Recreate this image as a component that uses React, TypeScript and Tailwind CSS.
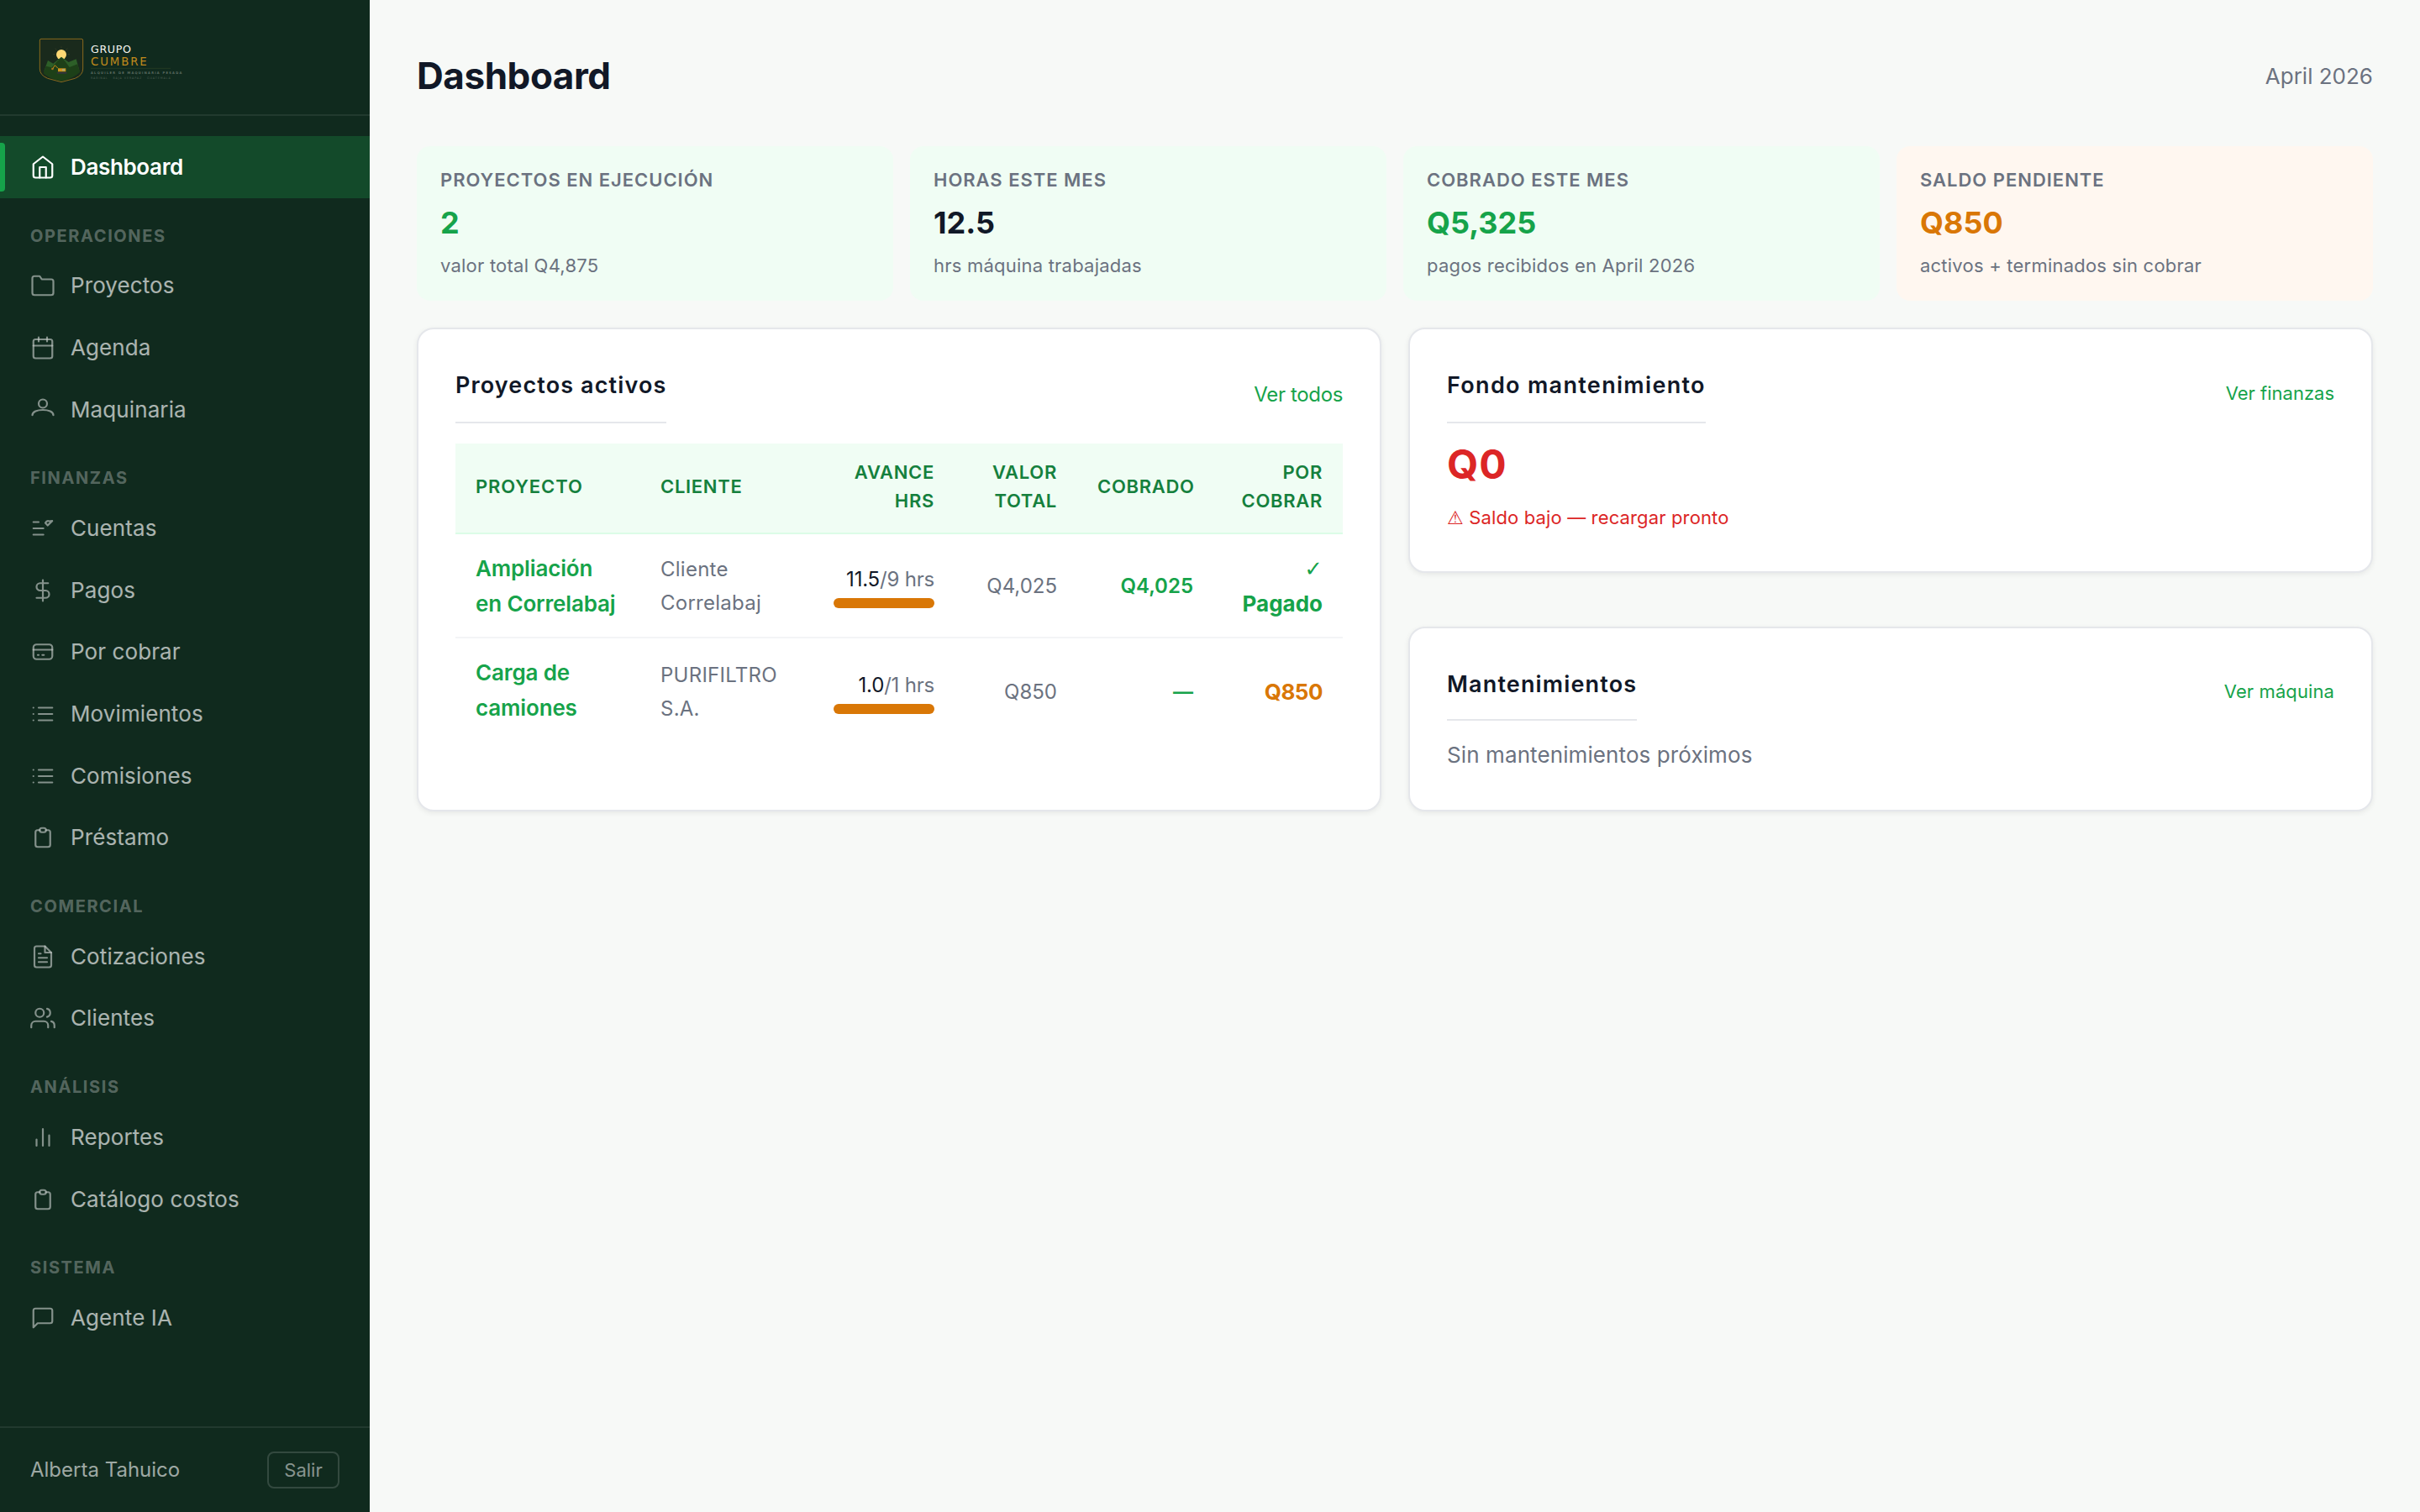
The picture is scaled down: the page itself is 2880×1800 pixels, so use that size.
import type { ReactNode } from "react";
import clsx from "clsx";

const icons = {
  home: (
    <>
      <path d="M3 9l9-7 9 7v11a2 2 0 0 1-2 2H5a2 2 0 0 1-2-2z" />
      <path d="M9 22V12h6v10" />
    </>
  ),
  folder: <path d="M22 19a2 2 0 0 1-2 2H4a2 2 0 0 1-2-2V5a2 2 0 0 1 2-2h5l2 3h9a2 2 0 0 1 2 2z" />,
  calendar: (
    <>
      <rect x="3" y="4" width="18" height="18" rx="2" />
      <path d="M16 2v4M8 2v4M3 10h18" />
    </>
  ),
  operator: (
    <>
      <circle cx="12" cy="6" r="4" />
      <path d="M2 17C2 13.6 6.8 12 12 12s10 1.6 10 5" />
    </>
  ),
  accounts: <path d="M3 6h5M3 12h9.5M3 18h9.5M20.9 4.9l-4.3 4.3-2.2-2.4c1-1.8 2.6-2 3.6-1.6z" />,
  dollar: <path d="M12 2v20M17 5H9.5a3.5 3.5 0 0 0 0 7h5a3.5 3.5 0 0 1 0 7H6" />,
  card: (
    <>
      <rect x="3" y="5" width="18" height="14" rx="3" />
      <path d="M3 10h18M7.2 15h.8M11.5 15h1.5" />
    </>
  ),
  list: <path d="M8 6h13M8 12h13M8 18h13M3 6h.01M3 12h.01M3 18h.01" />,
  clipboard: (
    <>
      <path d="M9 5H7a2 2 0 0 0-2 2v12a2 2 0 0 0 2 2h10a2 2 0 0 0 2-2V7a2 2 0 0 0-2-2h-2" />
      <rect x="9" y="3" width="6" height="4" rx="2" />
    </>
  ),
  file: (
    <>
      <path d="M14 2H6a2 2 0 0 0-2 2v16a2 2 0 0 0 2 2h12a2 2 0 0 0 2-2V8z" />
      <path d="M14 2v6h6M16 13H8M16 17H8M10 9H8" />
    </>
  ),
  users: (
    <>
      <path d="M17 21v-2a4 4 0 0 0-4-4H5a4 4 0 0 0-4 4v2" />
      <circle cx="9" cy="7" r="4" />
      <path d="M23 21v-2a4 4 0 0 0-3-3.87M16 3.13a4 4 0 0 1 0 7.75" />
    </>
  ),
  chart: <path d="M18 20V10M12 20V4M6 20v-6" />,
  chat: <path d="M21 15a2 2 0 0 1-2 2H7l-4 4V5a2 2 0 0 1 2-2h14a2 2 0 0 1 2 2z" />,
};

type IconName = keyof typeof icons;
type NavEntry = { label: string; icon: IconName; active?: boolean };

const navGroups: { title?: string; items: NavEntry[] }[] = [
  { items: [{ label: "Dashboard", icon: "home", active: true }] },
  {
    title: "OPERACIONES",
    items: [
      { label: "Proyectos", icon: "folder" },
      { label: "Agenda", icon: "calendar" },
      { label: "Maquinaria", icon: "operator" },
    ],
  },
  {
    title: "FINANZAS",
    items: [
      { label: "Cuentas", icon: "accounts" },
      { label: "Pagos", icon: "dollar" },
      { label: "Por cobrar", icon: "card" },
      { label: "Movimientos", icon: "list" },
      { label: "Comisiones", icon: "list" },
      { label: "Préstamo", icon: "clipboard" },
    ],
  },
  {
    title: "COMERCIAL",
    items: [
      { label: "Cotizaciones", icon: "file" },
      { label: "Clientes", icon: "users" },
    ],
  },
  {
    title: "ANÁLISIS",
    items: [
      { label: "Reportes", icon: "chart" },
      { label: "Catálogo costos", icon: "clipboard" },
    ],
  },
  { title: "SISTEMA", items: [{ label: "Agente IA", icon: "chat" }] },
];

const stats = [
  { label: "PROYECTOS EN EJECUCIÓN", value: "2", note: "valor total Q4,875", bg: "bg-[#f0fdf4]", color: "text-[#16a34a]" },
  { label: "HORAS ESTE MES", value: "12.5", note: "hrs máquina trabajadas", bg: "bg-[#f0fdf4]", color: "text-[#111827]" },
  { label: "COBRADO ESTE MES", value: "Q5,325", note: "pagos recibidos en April 2026", bg: "bg-[#f0fdf4]", color: "text-[#16a34a]" },
  { label: "SALDO PENDIENTE", value: "Q850", note: "activos + terminados sin cobrar", bg: "bg-[#fff7f0]", color: "text-[#d97706]" },
];

const projects = [
  {
    name: ["Ampliación", "en Correlabaj"],
    client: ["Cliente", "Correlabaj"],
    hours: "11.5",
    planned: "9",
    total: "Q4,025",
    paid: "Q4,025",
    due: null,
  },
  {
    name: ["Carga de", "camiones"],
    client: ["PURIFILTRO", "S.A."],
    hours: "1.0",
    planned: "1",
    total: "Q850",
    paid: "—",
    due: "Q850",
  },
];

function Logo() {
  return (
    <svg width="200" height="64" viewBox="108 108 600 192" fontFamily="DejaVu Sans, sans-serif">
      <path
        d="M147 139H291Q296 139 296 144V246Q296 268 268 280L219 293L170 280Q142 268 142 246V144Q142 139 147 139z"
        fill="#1a2a1c"
        stroke="#8a6a1e"
        strokeWidth="3"
      />
      <g stroke="#3d4327" strokeWidth="2">
        <path d="M219 166v6M197 173l5 5M241 173l-5 5M189 194h8M241 194h8" />
      </g>
      <circle cx="219" cy="195" r="18" fill="#fdd874" />
      <path d="M157 254L171 216L190 227L219 203L245 222L272 211L284 254z" fill="#2d5f28" />
      <path d="M155 262L164 236L184 241L205 218L219 205L232 218L248 240L277 229L285 258Q262 280 219 290Q176 282 155 262z" fill="#1d4018" />
      <path d="M207 244L196 233L188 246" fill="none" stroke="#c8901c" strokeWidth="3" />
      <path d="M184 242l8 0l-2 8l-6 -1z" fill="#a8741c" />
      <rect x="207" y="244" width="28" height="12" fill="#d0941c" />
      <rect x="222" y="246" width="9" height="7" fill="#a8a878" />
      <rect x="203" y="257" width="36" height="6" rx="3" fill="#33333a" />
      <text x="324" y="190" fontSize="38" fill="#f5f5ef" textLength="144">
        GRUPO
      </text>
      <text x="324" y="234" fontSize="40" fill="#c08a1c" textLength="200">
        CUMBRE
      </text>
      <path d="M324 244H609" stroke="#243a24" strokeWidth="3" />
      <text x="324" y="264" fontSize="11" fontWeight="700" fill="#5f6f64" textLength="325">
        ALQUILER DE MAQUINARIA PESADA
      </text>
      <text x="324" y="282" fontSize="10" fill="#4a5c50" textLength="284">
        RABINAL · BAJA VERAPAZ · GUATEMALA
      </text>
    </svg>
  );
}

function NavItem({ label, icon, active }: NavEntry) {
  return (
    <a
      className={clsx(
        "relative flex h-[73.6px] items-center gap-[18px] px-9 text-[26px] leading-[42px]",
        active ? "bg-[#134a2a] font-semibold tracking-[-0.36px] text-white" : "tracking-[0.1px] text-white/65",
      )}
    >
      {active && <span className="absolute inset-y-2 left-0 w-1.5 rounded-r-[4px] bg-[#16a34a]" />}
      <svg
        width="30"
        height="30"
        viewBox="0 0 24 24"
        fill="none"
        stroke="currentColor"
        strokeWidth="1.75"
        strokeLinecap="round"
        strokeLinejoin="round"
        className={active ? "" : "opacity-75"}
      >
        {icons[icon]}
      </svg>
      {label}
    </a>
  );
}

function Sidebar() {
  return (
    <aside className="flex w-[440px] shrink-0 flex-col bg-[#102a1e]">
      <div className="border-b-2 border-white/8 p-9">
        <Logo />
      </div>
      <nav className="flex-1 pt-6">
        {navGroups.map((group) => (
          <div key={group.title ?? "main"}>
            {group.title && (
              <div className="px-9 pt-[29px] pb-[7px] text-[20px] leading-8 font-bold tracking-[1.6px] text-white/30">
                {group.title}
              </div>
            )}
            {group.items.map((item) => (
              <NavItem key={item.label} {...item} />
            ))}
          </div>
        ))}
      </nav>
      <div className="flex items-center justify-between border-t-2 border-white/8 px-9 py-7">
        <span className="text-[24px] leading-[38px] text-white/60">Alberta Tahuico</span>
        <button className="h-11 w-[86px] rounded-lg border-2 border-white/15 text-[22px] leading-none text-white/50">
          Salir
        </button>
      </div>
    </aside>
  );
}

function Card({ className, children }: { className?: string; children: ReactNode }) {
  return (
    <section
      className={clsx(
        "rounded-[20px] border-2 border-[#e5e7eb] bg-white p-11 shadow-[0_2px_6px_rgba(0,0,0,0.07)]",
        className,
      )}
    >
      {children}
    </section>
  );
}

function CardTitle({ className, children }: { className?: string; children: ReactNode }) {
  return (
    <h2
      className={clsx(
        "border-b-2 border-[#e5e7eb] text-[27px] leading-[45px] font-semibold text-[#111827]",
        className,
      )}
    >
      {children}
    </h2>
  );
}

function ProjectsTable() {
  return (
    <table className="mt-6 w-full table-fixed border-separate border-spacing-0">
      <colgroup>
        <col className="w-[220px]" />
        <col className="w-[206px]" />
        <col className="w-[168px]" />
        <col className="w-[146px]" />
        <col className="w-[162px]" />
        <col className="w-[154px]" />
      </colgroup>
      <thead>
        <tr className="h-[108px] text-right text-[22px] leading-[34px] tracking-[0.7px] text-[#15803d] [&>th]:border-b-2 [&>th]:border-[#dcfce7] [&>th]:bg-[#f0fdf4] [&>th]:px-6 [&>th]:pb-[5px] [&>th]:font-semibold">
          <th className="text-left tracking-[0.9px]">PROYECTO</th>
          <th className="text-left">CLIENTE</th>
          <th>AVANCE HRS</th>
          <th>VALOR TOTAL</th>
          <th className="whitespace-nowrap">COBRADO</th>
          <th>POR COBRAR</th>
        </tr>
      </thead>
      <tbody>
        {projects.map((p, i) => (
          <tr
            key={p.name[0]}
            className={clsx(
              "text-right text-[24px] leading-10 text-[#6b7280] [&>td]:px-6",
              i === 0
                ? "h-[124px] [&>td]:border-b-2 [&>td]:border-[#f3f4f6] [&>td]:pt-0.5"
                : "h-[124px] [&>td:not(:first-child)]:pt-[3px]",
            )}
          >
            <td className="text-left text-[26px] leading-[42px] font-semibold tracking-[-0.15px] whitespace-nowrap text-[#16a34a]">
              {p.name[0]}
              <br />
              {p.name[1]}
            </td>
            <td className="text-left tracking-[0.25px]">
              {p.client[0]}
              <br />
              {p.client[1]}
            </td>
            <td>
              <div className="-mt-0.5 tracking-[-0.2px] whitespace-nowrap">
                <span className="text-[#111827]">{p.hours}</span>/{p.planned} hrs
              </div>
              <div className="mt-0.5 h-3 rounded-full bg-[#d97706]" />
            </td>
            <td>{p.total}</td>
            <td className="font-semibold text-[#16a34a]">{p.paid}</td>
            <td
              className={clsx(
                "text-[26px] leading-[42px] font-bold",
                p.due ? "tracking-[-0.5px] text-[#d97706]" : "text-[#16a34a]",
              )}
            >
              {p.due ?? (
                <>
                  <span className="font-['DejaVu_Sans'] font-normal leading-none">✓</span> Pagado
                </>
              )}
            </td>
          </tr>
        ))}
      </tbody>
    </table>
  );
}

export default function App() {
  return (
    <div className="flex h-[1800px] w-[2880px] bg-[#f7f9f7] font-['Inter',sans-serif]">
      <Sidebar />
      <main className="flex-1 p-14">
        <header className="flex h-[70px] items-start justify-between">
          <h1 className="text-[44px] leading-[68px] font-bold tracking-[-0.44px] text-[#111827]">Dashboard</h1>
          <span className="text-[26px] leading-[69px] text-[#6b7280]">April 2026</span>
        </header>

        {/* Monthly stats */}
        <div className="mt-12 grid grid-cols-4 gap-5">
          {stats.map((s) => (
            <div key={s.label} className={clsx("h-[184px] rounded-2xl px-7 py-6", s.bg)}>
              <div className="text-[22px] leading-8 font-semibold tracking-[0.98px] text-[#6b7280]">{s.label}</div>
              <div className={clsx("mt-1.5 text-[36px] leading-[58px] font-bold", s.color)}>{s.value}</div>
              <div className="mt-1 text-[22px] leading-9 tracking-[0.22px] text-[#6b7280]">{s.note}</div>
            </div>
          ))}
        </div>

        <div className="mt-8 grid grid-cols-2 gap-8">
          <Card className="h-[576px]">
            <div className="flex items-center justify-between">
              <CardTitle className="pb-[21px] tracking-[1.12px]">Proyectos activos</CardTitle>
              <a className="text-[24px] leading-[38px] tracking-[-0.36px] text-[#16a34a]">Ver todos</a>
            </div>
            <ProjectsTable />
          </Card>

          <div className="flex flex-col gap-16">
            <Card className="h-[292px]">
              <div className="flex items-center justify-between">
                <CardTitle className="pb-[21px] tracking-[1.32px]">Fondo mantenimiento</CardTitle>
                <a className="pb-[3px] text-[22px] leading-[35px] text-[#16a34a]">Ver finanzas</a>
              </div>
              <div className="mt-[11px] text-[48px] leading-[75px] font-bold tracking-[1px] text-[#dc2626]">Q0</div>
              <div className="mt-2 text-[22px] leading-9 tracking-[0.14px] text-[#dc2626]">
                <span className="font-['DejaVu_Sans'] leading-none">⚠</span> Saldo bajo — recargar pronto
              </div>
            </Card>
            <Card className="h-[220px]">
              <div className="flex items-center justify-between">
                <CardTitle className="pb-[19px] tracking-[1.15px]">Mantenimientos</CardTitle>
                <a className="pb-1 text-[22px] leading-[35px] tracking-[0.1px] text-[#16a34a]">Ver máquina</a>
              </div>
              <p className="mt-5 text-[26px] leading-[42px] tracking-[0.1px] text-[#6b7280]">
                Sin mantenimientos próximos
              </p>
            </Card>
          </div>
        </div>
      </main>
    </div>
  );
}
